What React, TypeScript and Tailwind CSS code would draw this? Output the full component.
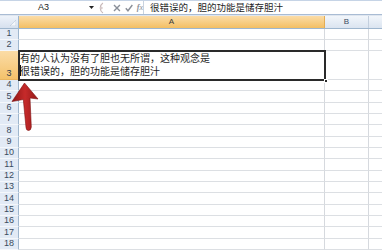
import React from "react";

const rowHeights: number[] = [11, 11, 29.5, 11.3, 11.33, 11.33, 11.33, 11.33, 11.33, 11.33, 11.33, 11.33, 11.33, 11.33, 11.33, 11.33, 11.33, 11.33, 11.33];

function Row({ n, h }: { n: number; h: number }) {
  const selected = n === 3;
  return (
    <div className="flex shrink-0" style={{ height: h }}>
      <div
        className={
          selected
            ? "w-[19px] shrink-0 flex items-end justify-center pb-[1px] text-[9px] leading-[10px] text-[#2d3a4a] bg-gradient-to-b from-[#fbdca6] to-[#f4c26a] border-r border-r-[#9eb6ce] border-b border-b-[#e8b560]"
            : "w-[19px] shrink-0 flex items-end justify-center pb-[1px] text-[9px] leading-[10px] text-[#3a4a5e] bg-[#e2eaf5] border-r border-r-[#9eb6ce] border-b border-b-[#f4f7fb]"
        }
      >
        {n}
      </div>
      <div className="relative w-[306px] shrink-0 border-r border-r-[#d6d9de] border-b border-b-[#dcdfe3]">
        {selected && (
          <>
            <div className="absolute inset-0 flex flex-col justify-end pl-[1px] pb-[2px] text-[10px] leading-[13px] text-[#1e1e1e] [font-family:'Noto_Sans_CJK_SC',sans-serif] whitespace-nowrap">
              <div>有的人认为没有了胆也无所谓，这种观念是</div>
              <div>很错误的，胆的功能是储存胆汁</div>
            </div>
            <div className="absolute left-[1px] bottom-[3px] w-px h-[11px] bg-[#111]" />
          </>
        )}
      </div>
      <div className="w-[44px] shrink-0 border-r border-r-[#d6d9de] border-b border-b-[#dcdfe3]" />
      <div className="flex-1 border-b border-b-[#dcdfe3]" />
    </div>
  );
}

export default function App() {
  return (
    <div className="relative w-[382px] h-[250px] overflow-hidden bg-white [font-family:'Liberation_Sans','Noto_Sans_CJK_SC',sans-serif]">
      {/* Formula bar */}
      <div className="flex h-[15px] bg-white border-t border-t-[#c6d4e6] border-b border-b-[#a9bcd4]">
        <div className="w-[87px] shrink-0 flex items-center justify-center text-[9px] text-[#222]">A3</div>
        <div className="w-[8px] shrink-0 flex items-center justify-center">
          <svg width="5" height="3" viewBox="0 0 5 3"><path d="M0 0 H5 L2.5 3 Z" fill="#222" /></svg>
        </div>
        <div className="w-[48px] shrink-0 flex items-center gap-[4px] pl-[1px]">
          <svg width="8" height="12" viewBox="0 0 8 12">
            <path d="M7 1 A6 6 0 0 0 7 11" fill="none" stroke="#c9b9b9" strokeWidth="1.2" />
            <circle cx="5.5" cy="6" r="1.3" fill="#d8cccc" />
          </svg>
          <svg width="8" height="8" viewBox="0 0 8 8" className="ml-[5px]">
            <path d="M1 1 L7 7 M7 1 L1 7" stroke="#8a8f98" strokeWidth="1.4" />
          </svg>
          <svg width="8" height="8" viewBox="0 0 8 8">
            <path d="M0.8 4.2 L3 6.8 L7.4 1" fill="none" stroke="#8a8f98" strokeWidth="1.4" />
          </svg>
          <span className="text-[8px] italic text-[#8a8f98] [font-family:'Liberation_Serif',serif] leading-none">
            <span className="font-bold">f</span>x
          </span>
        </div>
        <div className="flex-1 flex items-center border-l border-l-[#c9d3df] pl-[6px] text-[9.5px] text-[#1e1e1e] whitespace-nowrap [font-family:'Noto_Sans_CJK_SC',sans-serif]">
          很错误的，胆的功能是储存胆汁
        </div>
      </div>
      <div className="h-[1px] bg-[#dfe6ef]" />
      {/* Column headers */}
      <div className="flex h-[12.5px] border-b border-b-[#9eb6ce]">
        <div className="relative w-[19px] shrink-0 bg-gradient-to-b from-[#eef3fa] to-[#d6e0ee] border-r border-r-[#9eb6ce]">
          <svg className="absolute right-[2px] bottom-[2px]" width="6" height="6" viewBox="0 0 6 6">
            <path d="M6 0 V6 H0 Z" fill="#f4f7fb" stroke="#b8c6d8" strokeWidth="0.6" />
          </svg>
        </div>
        <div className="w-[306px] shrink-0 flex items-center justify-center text-[8px] text-[#3a3a3a] bg-gradient-to-b from-[#fbdca6] to-[#f3bf62] border-r border-r-[#e3ad55]">A</div>
        <div className="w-[44px] shrink-0 flex items-center justify-center text-[8px] text-[#3a4a5e] bg-gradient-to-b from-[#f2f6fb] to-[#dbe4f0] border-r border-r-[#c3cfde]">B</div>
        <div className="flex-1 bg-gradient-to-b from-[#f2f6fb] to-[#dbe4f0]" />
      </div>
      {/* Rows */}
      <div className="relative flex flex-col">
        {rowHeights.map((h, i) => (
          <Row key={i} n={i + 1} h={h} />
        ))}
        {/* selection border for A3 */}
        <div className="absolute left-[18px] top-[21.5px] w-[308px] h-[30.5px] border-2 border-[#2a2a2a] pointer-events-none" />
        <div className="absolute left-[324px] top-[50px] w-[4px] h-[4px] bg-[#2a2a2a] border border-white" />
      </div>
      {/* Red arrow */}
      <svg className="absolute left-0 top-[80px]" width="45" height="55" viewBox="0 80 45 55">
        <defs>
          <linearGradient id="ag" x1="0" y1="0" x2="1" y2="0">
            <stop offset="0" stopColor="#8f1616" />
            <stop offset="0.5" stopColor="#c62a2a" />
            <stop offset="1" stopColor="#931818" />
          </linearGradient>
        </defs>
        <path
          d="M24.5 83 L38 99 L30 98 L31.3 127 Q31 130.5 28.5 130.5 Q26.2 130.5 26 127.5 L23.3 99.5 L12 101.5 Z"
          fill="url(#ag)"
          stroke="#7e1010"
          strokeWidth="0.6"
          strokeLinejoin="round"
        />
      </svg>
    </div>
  );
}
